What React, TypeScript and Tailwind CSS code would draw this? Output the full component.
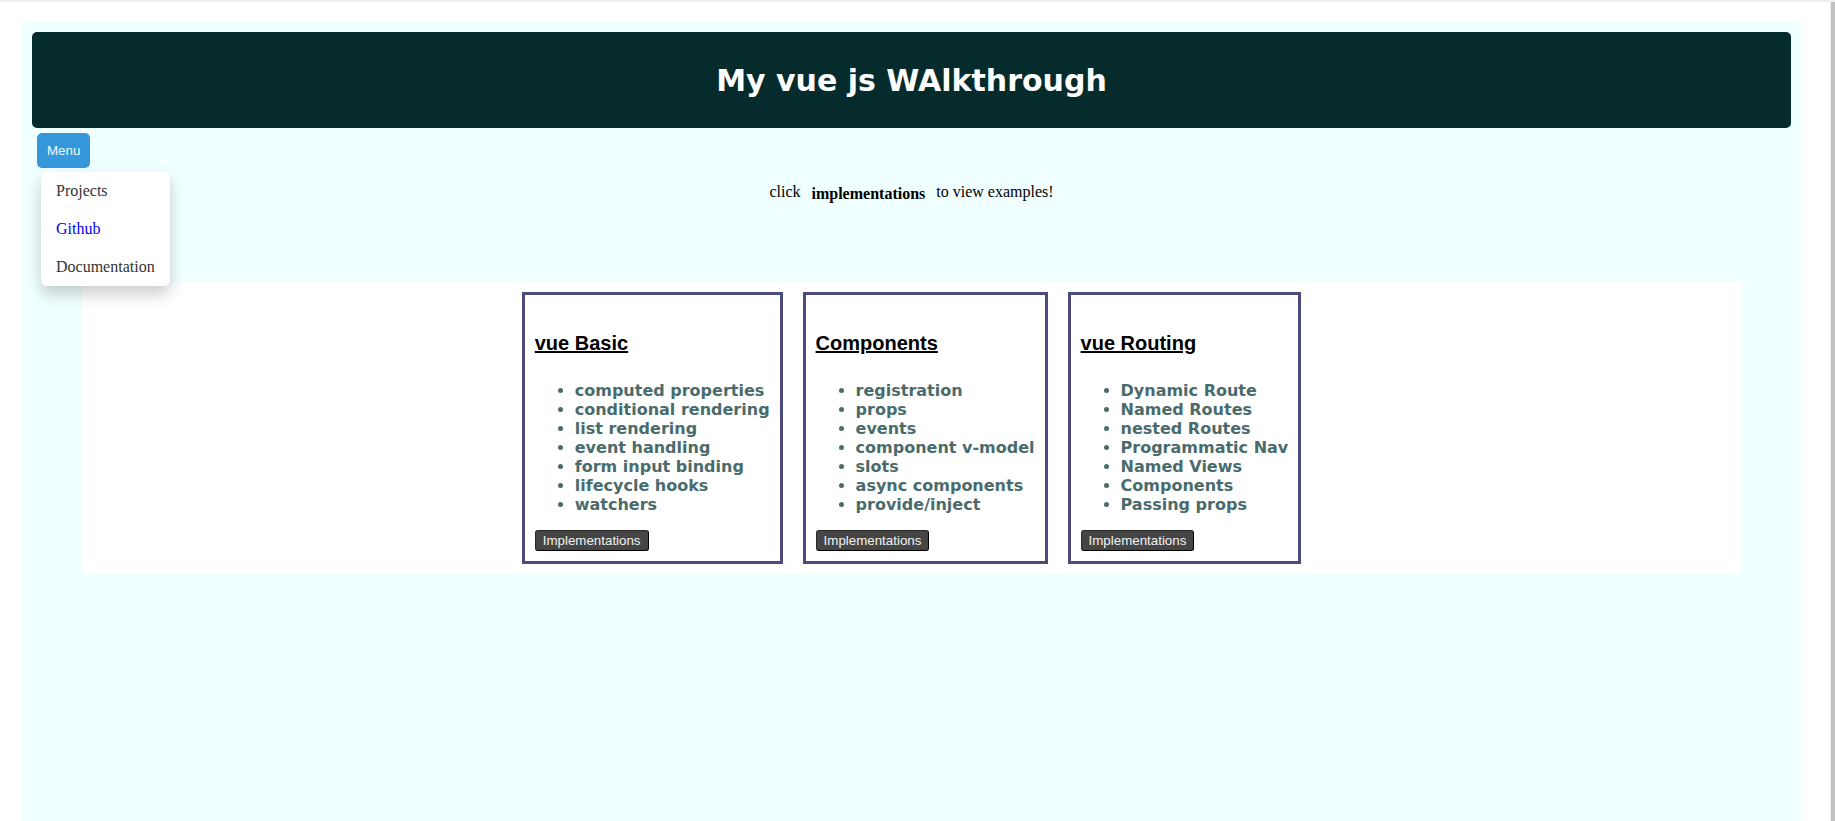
const topics = [
  {
    title: 'vue Basic',
    items: [
      'computed properties',
      'conditional rendering',
      'list rendering',
      'event handling',
      'form input binding',
      'lifecycle hooks',
      'watchers',
    ],
  },
  {
    title: 'Components',
    items: [
      'registration',
      'props',
      'events',
      'component v-model',
      'slots',
      'async components',
      'provide/inject',
    ],
  },
  {
    title: 'vue Routing',
    items: [
      'Dynamic Route',
      'Named Routes',
      'nested Routes',
      'Programmatic Nav',
      'Named Views',
      'Components',
      'Passing props',
    ],
  },
];

const menuLinks = [
  { label: 'Projects', className: 'text-[#333333]' },
  { label: 'Github', className: 'text-[#0000ee]' },
  { label: 'Documentation', className: 'text-[#333333]' },
];

function TopicCard({ title, items }: { title: string; items: string[] }) {
  return (
    <div className="m-[10px] border-[3px] border-[#4c4c7c] bg-white p-[10px]">
      <h4 className="my-[26.6px] font-['Liberation_Sans',Arial,sans-serif] text-[20px] font-bold leading-[23px] text-black underline">
        {title}
      </h4>
      <ul className="mb-4 list-disc pl-10 font-['DejaVu_Sans',Verdana,sans-serif] text-[16px] font-bold leading-[19px] text-[#4a6b6c]">
        {items.map((item) => (
          <li key={item}>{item}</li>
        ))}
      </ul>
      <button
        type="button"
        className="block h-[21px] rounded-[3px] border border-[#2a2a2a] border-b-black border-r-black bg-[#454545] px-[7px] font-['Liberation_Sans',Arial,sans-serif] text-[13.33px] leading-[17px] text-[#f2f2f2]"
      >
        Implementations
      </button>
    </div>
  );
}

export default function App() {
  return (
    <div className="flex min-h-screen border-t-2 border-[#efefef] bg-white">
      <div className="flex-1 pt-5 pl-[22px] pr-[29px]">
        <div className="min-h-[799px] bg-[#f0ffff] px-[10px] pt-[10px]">
          {/* Header */}
          <header className="flex h-[96px] items-center justify-center rounded-[5px] bg-[#062b2d]">
            <h1 className="font-['DejaVu_Sans',Verdana,sans-serif] text-[30px] font-bold text-white">
              My vue js WAlkthrough
            </h1>
          </header>

          {/* Menu + dropdown */}
          <div className="relative ml-[5px] mt-[5px] w-max">
            <button
              type="button"
              className="h-[35px] rounded-[5px] bg-[#3498db] px-[10px] font-['Liberation_Sans',Arial,sans-serif] text-[13.33px] text-[#f3f9fd]"
            >
              Menu
            </button>
            <div className="absolute left-[4px] top-[39px] z-10 w-[129px] rounded-[6px] bg-white shadow-[0_8px_16px_0_rgba(0,0,0,0.2)]">
              {menuLinks.map((link) => (
                <a
                  key={link.label}
                  href="#"
                  className={`block px-[15px] py-[10px] font-['Liberation_Serif','Times_New_Roman',serif] text-[16px] leading-[18px] ${link.className}`}
                >
                  {link.label}
                </a>
              ))}
            </div>
          </div>

          <p className="mt-[15px] text-center font-['Liberation_Serif','Times_New_Roman',serif] text-[16px] leading-[18px] text-black">
            click <b className="mx-[7px] inline-block align-[-2px] font-bold">implementations</b> to view examples!
          </p>

          {/* Topic cards */}
          <div className="mx-[50px] mt-[79px] flex items-start justify-center bg-white">
            {topics.map((topic) => (
              <TopicCard key={topic.title} title={topic.title} items={topic.items} />
            ))}
          </div>
        </div>
      </div>
      <div className="w-[5px] border-l border-[#f0f0f0] bg-[#c1c1c1]" />
    </div>
  );
}
